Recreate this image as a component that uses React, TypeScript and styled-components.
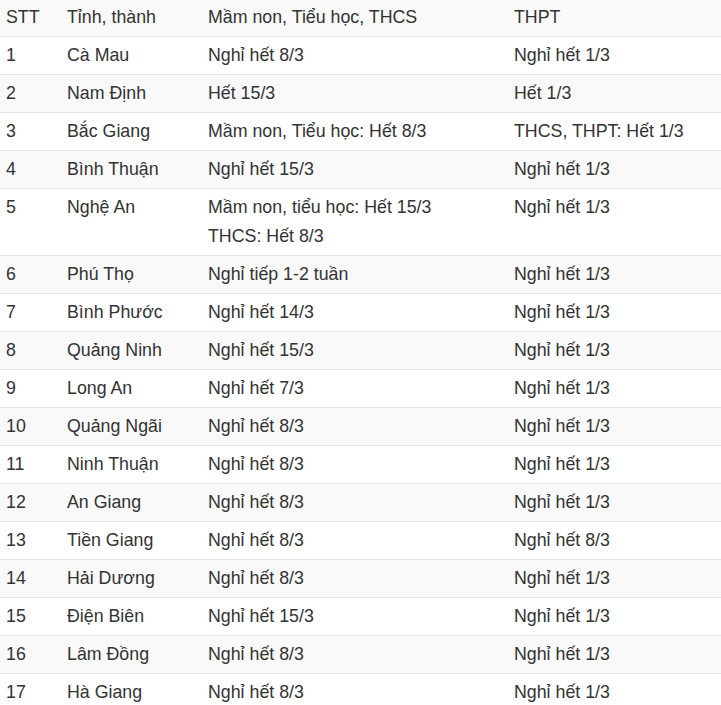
import styled, { createGlobalStyle } from "styled-components";

type Row = [string, string, string[], string];

const rows: Row[] = [
  ["1", "Cà Mau", ["Nghỉ hết 8/3"], "Nghỉ hết 1/3"],
  ["2", "Nam Định", ["Hết 15/3"], "Hết 1/3"],
  ["3", "Bắc Giang", ["Mầm non, Tiểu học: Hết 8/3"], "THCS, THPT: Hết 1/3"],
  ["4", "Bình Thuận", ["Nghỉ hết 15/3"], "Nghỉ hết 1/3"],
  ["5", "Nghệ An", ["Mầm non, tiểu học: Hết 15/3", "THCS: Hết 8/3"], "Nghỉ hết 1/3"],
  ["6", "Phú Thọ", ["Nghỉ tiếp 1-2 tuần"], "Nghỉ hết 1/3"],
  ["7", "Bình Phước", ["Nghỉ hết 14/3"], "Nghỉ hết 1/3"],
  ["8", "Quảng Ninh", ["Nghỉ hết 15/3"], "Nghỉ hết 1/3"],
  ["9", "Long An", ["Nghỉ hết 7/3"], "Nghỉ hết 1/3"],
  ["10", "Quảng Ngãi", ["Nghỉ hết 8/3"], "Nghỉ hết 1/3"],
  ["11", "Ninh Thuận", ["Nghỉ hết 8/3"], "Nghỉ hết 1/3"],
  ["12", "An Giang", ["Nghỉ hết 8/3"], "Nghỉ hết 1/3"],
  ["13", "Tiền Giang", ["Nghỉ hết 8/3"], "Nghỉ hết 8/3"],
  ["14", "Hải Dương", ["Nghỉ hết 8/3"], "Nghỉ hết 1/3"],
  ["15", "Điện Biên", ["Nghỉ hết 15/3"], "Nghỉ hết 1/3"],
  ["16", "Lâm Đồng", ["Nghỉ hết 8/3"], "Nghỉ hết 1/3"],
  ["17", "Hà Giang", ["Nghỉ hết 8/3"], "Nghỉ hết 1/3"],
];

const App = () => {
  return (
    <>
      <GlobalStyle />
      <Table>
        <colgroup>
          <col style={{ width: 61 }} />
          <col style={{ width: 141 }} />
          <col style={{ width: 306 }} />
          <col />
        </colgroup>
        <thead>
          <HeadRow>
            <HeadCell>STT</HeadCell>
            <HeadCell>Tỉnh, thành</HeadCell>
            <HeadCell>Mầm non, Tiểu học, THCS</HeadCell>
            <HeadCell>THPT</HeadCell>
          </HeadRow>
        </thead>
        <tbody>
          {rows.map(([no, name, lower, upper], i) => (
            <BodyRow key={no} $striped={i % 2 === 1}>
              <Cell>{no}</Cell>
              <Cell>{name}</Cell>
              <Cell>
                {lower.map((line) => (
                  <Line key={line}>{line}</Line>
                ))}
              </Cell>
              <Cell>{upper}</Cell>
            </BodyRow>
          ))}
        </tbody>
      </Table>
    </>
  );
};

const GlobalStyle = createGlobalStyle`
  html, body {
    margin: 0;
    padding: 0;
    background: #ffffff;
  }
  body {
    font-family: "Liberation Sans", Arial, sans-serif;
    color: #333333;
  }
`;

const Table = styled.table`
  width: 100%;
  border-collapse: collapse;
  table-layout: fixed;
  font-size: 17.8px;
`;

const HeadRow = styled.tr`
  background: #f9f9f9;
`;

const HeadCell = styled.th`
  text-align: left;
  font-weight: normal;
  padding: 3px 6px 4px;
  line-height: 29px;
  white-space: nowrap;
`;

const BodyRow = styled.tr<{ $striped: boolean }>`
  background: ${({ $striped }) => ($striped ? "#f9f9f9" : "#ffffff")};
`;

const Cell = styled.td`
  border-top: 1px solid #e3e3e3;
  padding: 4px 6px;
  line-height: 29px;
  vertical-align: top;
  white-space: nowrap;
`;

const Line = styled.div`
  display: block;
`;

export default App;
